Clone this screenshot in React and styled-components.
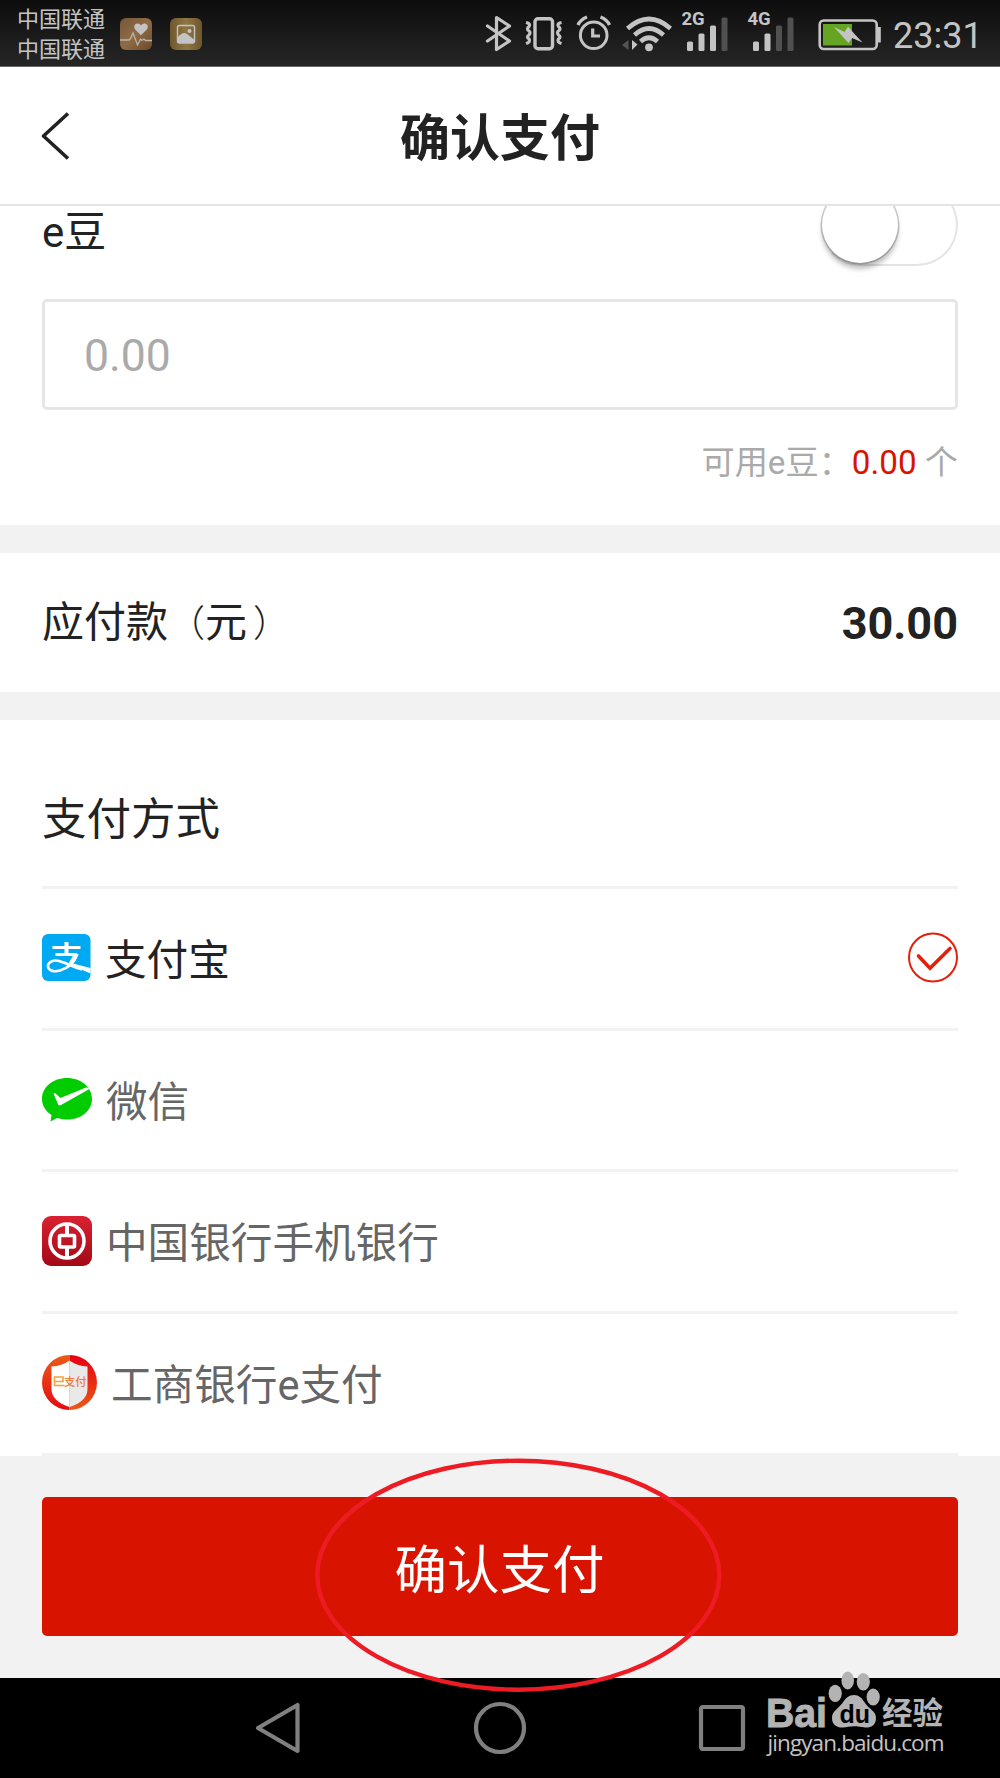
import React from 'react';
import styled, { createGlobalStyle } from 'styled-components';

const GlobalStyle = createGlobalStyle`
  * {
    box-sizing: border-box;
  }
  body {
    margin: 0;
    background: #fff;
    font-family: Roboto, "Noto Sans CJK SC", sans-serif;
    color: #222;
  }
  svg {
    display: block;
    flex-shrink: 0;
  }
`

const Screen = styled.div`
  position: relative;
  display: flex;
  flex-direction: column;
  width: 1000px;
  height: 1778px;
  overflow: hidden;
  background: #fff;
`

const StatusBar = styled.div`
  display: flex;
  align-items: center;
  height: 67px;
  padding: 1px 0 0 17px;
  background: linear-gradient(#0d0d0d, #262626);
  border-bottom: 1px solid #666;
  color: #c4c4c4;
`

const Carriers = styled.div`
  width: 103px;
  padding-top: 3px;
  font-size: 22px;
  line-height: 30.5px;
  white-space: nowrap;
`

const Apps = styled.div`
  display: flex;
  gap: 18px;
  width: 364px;
`

const StatusIcons = styled.div`
  display: flex;
  align-items: center;
`

const Clock = styled.span`
  margin-left: 7px;
  padding-top: 4px;
  font-size: 36px;
  line-height: 42px;
`

const Header = styled.header`
  display: grid;
  grid-template-columns: 120px 1fr 120px;
  align-items: center;
  height: 139px;
  border-bottom: 2px solid #e4e4e4;
`

const Back = styled.button`
  padding: 0 0 0 40px;
  border: 0;
  background: none;
`

const Title = styled.h1`
  margin: 0;
  padding-top: 6px;
  font-size: 50px;
  line-height: 60px;
  font-weight: 700;
  text-align: center;
`

const Beans = styled.section`
  height: 319px;
  padding: 0 42px;
  overflow: hidden;
`

const BeanRow = styled.div`
  display: flex;
  justify-content: space-between;
  align-items: flex-start;
  height: 93px;
`

const Label = styled.span`
  padding-top: 2px;
  font-size: 42px;
  line-height: 50px;
`

const Paren = styled.span`
  margin-left: ${({ $gap }) => $gap || 0}px;
  font-size: 37px;
  font-weight: 300;
`

const Switch = styled.div`
  width: 139px;
  height: 82px;
  margin-top: -22px;
  border: 2.5px solid #e4e4e4;
  border-left-color: transparent;
  border-radius: 41px;
`

const Knob = styled.div`
  width: 76px;
  height: 76px;
  margin: 1px 0 0 1px;
  border-radius: 50%;
  background: #fff;
  box-shadow: 0 0 0 1.5px rgba(0, 0, 0, 0.2), 0 6px 5px rgba(0, 0, 0, 0.25);
`

const Amount = styled.div`
  display: flex;
  align-items: center;
  height: 111px;
  padding: 2px 0 0 39px;
  border: 3px solid #e6e6e6;
  border-radius: 5px;
  font-size: 44.5px;
  color: #aaa;
`

const Available = styled.div`
  margin-top: 33px;
  font-size: 33.2px;
  line-height: 40px;
  text-align: right;
  color: #aaa;
`

const Red = styled.span`
  color: #d81400;
`

const Band = styled.div`
  height: 28px;
  background: #f2f2f2;
`

const Payable = styled.section`
  display: flex;
  justify-content: space-between;
  align-items: center;
  height: 139px;
  padding: 0 42px;
`

const Total = styled.strong`
  padding-top: 2px;
  font-size: 45px;
  font-weight: 700;
`

const Methods = styled.section`
  height: 736px;
  padding: 0 42px;
  overflow: hidden;
`

const MethodsTitle = styled.h2`
  display: flex;
  align-items: flex-end;
  height: 169px;
  margin: 0;
  padding-bottom: 36px;
  border-bottom: 3px solid #f2f2f2;
  font-size: 44.5px;
  line-height: 60px;
  font-weight: 400;
`

const Method = styled.div`
  display: flex;
  align-items: center;
  height: 141.7px;
  padding-bottom: 1px;
  border-bottom: 3px solid #f2f2f2;
  color: ${({ $active }) => ($active ? '#222' : '#666')};
`

const MethodName = styled.span`
  flex: 1;
  margin-left: 14px;
  padding-top: 6px;
  font-size: 41.6px;
  line-height: 50px;
`

const Footer = styled.footer`
  height: 222px;
  padding: 41px 42px 0;
  background: #f2f2f2;
`

const PayButton = styled.button`
  width: 100%;
  height: 139px;
  padding: 0 1px 1px 0;
  border: 0;
  border-radius: 5px;
  background: #d81400;
  color: #fff;
  font-family: inherit;
  font-size: 52.5px;
`

const NavBar = styled.nav`
  display: flex;
  align-items: center;
  gap: 168px;
  height: 100px;
  padding-left: 250px;
  background: #000;
`

const Ring = styled.svg`
  position: absolute;
  left: 310px;
  top: 1453px;
`

const Watermark = styled.div`
  position: absolute;
  left: 766px;
  top: 1670px;
  width: 190px;
  height: 100px;
`

const HealthIcon = () => (
  <svg width="32" height="32" viewBox="0 0 32 32">
    <defs>
      <linearGradient id="bronze" x1="0" y1="0" x2="1" y2="1">
        <stop offset="0" stopColor="#755638" />
        <stop offset=".5" stopColor="#8f6c46" />
        <stop offset="1" stopColor="#6b4a2a" />
      </linearGradient>
    </defs>
    <rect width="32" height="32" rx="6" fill="url(#bronze)" />
    <path d="M21 17.300l-5.600-5.600c-2-2.200-1.200-6 1.800-6.100 1.800 0 3 .8 3.800 2 .8-1.200 2-2 3.700-2 3 .1 4.100 3.900 1.900 6.100z" fill="#c4c4c4" />
    <path d="M0 22h9l1.500-1.500L13 15l4.500 12 3-6 1.500 1.500 2-1.500 1.500 1.500H32" fill="none" stroke="#b9b4aa" strokeWidth="1.300" />
  </svg>
)

const GalleryIcon = () => (
  <svg width="32" height="32" viewBox="0 0 32 32">
    <defs>
      <linearGradient id="gold" x1="0" y1="0" x2="1" y2="0">
        <stop offset="0" stopColor="#6e572c" />
        <stop offset=".5" stopColor="#8f7645" />
        <stop offset="1" stopColor="#6e572c" />
      </linearGradient>
    </defs>
    <rect width="32" height="32" rx="6" fill="url(#gold)" />
    <rect x="7.500" y="7.500" width="17" height="17.500" rx="2" fill="none" stroke="#c4c4c4" strokeWidth="1.400" />
    <path d="M8 19q5-6 9-3l7 5.500V25H8z" fill="#c4c4c4" />
    <circle cx="19.500" cy="13" r="2" fill="#c4c4c4" />
  </svg>
)

const BluetoothIcon = () => (
  <svg width="30" height="40" viewBox="484 14 30 40" fill="none" stroke="#c4c4c4" strokeWidth="3.200" strokeLinejoin="round" strokeLinecap="round">
    <path d="M487.500 26l22 15-13 8.500v-32l13 8.500-22 15" />
  </svg>
)

const VibrateIcon = () => (
  <svg width="50" height="40" viewBox="514 14 50 40" fill="none" stroke="#c4c4c4" strokeWidth="3.400">
    <rect x="535" y="18.700" width="17.500" height="30" rx="3" />
    <path
      d="M526 22.500q5 1 3 4-3 2.500 0 4.500 2 1.500 0 4-3 2 0 4 2 3-3 4.500M561.500 22.500q-5 1-3 4 3 2.500 0 4.500-2 1.500 0 4 3 2 0 4-2 3 3 4.500"
      strokeWidth="3.200"
    />
  </svg>
)

const AlarmIcon = () => (
  <svg width="50" height="40" viewBox="564 14 50 40" fill="none" stroke="#c4c4c4" strokeWidth="3">
    <circle cx="593.700" cy="35.300" r="13.300" />
    <path d="M592.700 28.500v7.500h7.300" strokeWidth="3.200" />
    <path d="M578 25q2.500-5.500 9-8M609.500 25q-2.500-5.500-9-8" strokeWidth="3.400" />
  </svg>
)

const WifiIcon = () => (
  <svg width="62" height="40" viewBox="614 14 62 40" fill="none" stroke="#c4c4c4" strokeWidth="4.600">
    <path d="M627.500 28.500q21.500-19 43 0M634.500 35q14.500-13 29 0M640.500 41.500q8.500-7.500 17 0" />
    <circle cx="649" cy="47.300" r="3.900" fill="#c4c4c4" stroke="none" />
    <path d="M628.500 40v10l-6.500-5z" fill="#555" stroke="none" />
    <path d="M632 50V40l5.500 4.500z" fill="#c4c4c4" stroke="none" />
  </svg>
)

const Signal = ({ label, bars }) => (
  <svg width="66" height="58" viewBox="0 -7 66 58">
    <text x="5.500" y="13.200" fontFamily="Roboto" fontSize="18.500" fontWeight="700" fill="#c4c4c4">{label}</text>
    {[0, 1, 2, 3].map((i) => (
      <rect key={i} x={11 + i * 11.500} y={29.500 - i * 8} width="6" height={9.500 + i * 8} rx="1.500" fill={i < bars ? '#c4c4c4' : '#505050'} />
    ))}
  </svg>
)

const BatteryIcon = () => (
  <svg width="78" height="40" viewBox="808 14 78 40">
    <rect x="819.700" y="20.500" width="57" height="28.500" rx="4" fill="none" stroke="#c4c4c4" strokeWidth="2.600" />
    <rect x="878" y="27" width="2.800" height="15.500" fill="#c4c4c4" />
    <rect x="823" y="24" width="29" height="21.500" fill="#66a523" />
    <path d="M834 27l10.500 5 3.500-5.500 6.500 7.500 8 8.500-10.500-4.500-3.500 5z" fill="#c4c4c4" />
  </svg>
)

const AlipayIcon = () => (
  <svg width="49" height="48" viewBox="0 0 49 48">
    <rect width="48.500" height="47" rx="6" fill="#00aaf2" />
    <g fill="none" stroke="#fff" strokeWidth="2.800">
      <path d="M10.500 13.500h28M13.500 20.500h21.500" />
      <path d="M24.500 8v12" strokeWidth="4" />
      <path d="M35.500 20c-3 8-9 14-17.500 16.500-7 2-12.500-.5-12-5 .5-4 6-6 11-4.500 7 2 15 6 23 8.500" strokeWidth="2.600" />
    </g>
    <path d="M36 20l-7 9 19.500 5v5.500q-11-4.500-22-10l5.500-9.500z" fill="#fff" />
  </svg>
)

const WechatIcon = () => (
  <svg width="50" height="44" viewBox="0 0 50 44">
    <path d="M25 0c14 0 25 9 25 21S39 41.500 25 41.500c-4 0-7-.7-10-1.500L8.500 43.500 9.500 37C4 33.500 0 28 0 21 0 9 11 0 25 0z" fill="#0c0" />
    <path d="M11.500 15.500q1-.8 2 0l5 4.500L44 9.500q2-.5 3.500 1.500L19 27q-2 1.200-3-.8z" fill="#fff" />
  </svg>
)

const BocIcon = () => (
  <svg width="50" height="50" viewBox="0 0 50 50">
    <defs>
      <linearGradient id="boc" x1="0" y1="0" x2="0" y2="1">
        <stop offset="0" stopColor="#d92231" />
        <stop offset="1" stopColor="#a30917" />
      </linearGradient>
    </defs>
    <rect width="50" height="50" rx="9" fill="url(#boc)" />
    <g fill="none" stroke="#fff">
      <circle cx="25" cy="25" r="17" strokeWidth="3.600" />
      <rect x="17.500" y="19.500" width="15" height="11.500" rx="1" strokeWidth="3.600" />
      <path d="M25 8v10M25 32v10" strokeWidth="4" />
    </g>
  </svg>
)

const IcbcIcon = () => (
  <svg width="55" height="55" viewBox="0 0 55 55">
    <defs>
      <linearGradient id="icbcLeft" x1="0" y1="0" x2="0" y2="1">
        <stop offset="0" stopColor="#ea5a18" />
        <stop offset="1" stopColor="#e60a12" />
      </linearGradient>
      <linearGradient id="icbcRight" x1="0" y1="0" x2="0" y2="1">
        <stop offset="0" stopColor="#e60012" />
        <stop offset="1" stopColor="#ea5a18" />
      </linearGradient>
    </defs>
    <path d="M27.500 0a27.500 27.500 0 0 0 0 55z" fill="url(#icbcLeft)" />
    <path d="M27.500 0a27.500 27.500 0 0 1 0 55z" fill="url(#icbcRight)" />
    <path d="M27.500 5.500Q20 11 9.500 11.500V34q0 12 18 18z" fill="#fff" />
    <path d="M27.500 5.500Q35 11 45.500 11.500V34q0 12-18 18z" fill="#e9e9ea" />
    <path d="M12 26.500h9v-4.500h-8.500v8.500h10" fill="none" stroke="#f5a13a" strokeWidth="1.600" />
    <text x="22" y="31" fontFamily="Noto Sans CJK SC" fontSize="11.300" fontWeight="500" fill="#ef7a3c">支付</text>
  </svg>
)

const CheckIcon = () => (
  <svg width="50" height="51" viewBox="0 0 50 51" fill="none" stroke="#e2210c">
    <circle cx="25" cy="25.500" r="24" strokeWidth="2" />
    <path d="M10.500 24l11.500 12.200L42 16.500" strokeWidth="3.600" strokeLinecap="round" />
  </svg>
)

const methods = [
  { name: '支付宝', icon: <AlipayIcon />, active: true },
  { name: '微信', icon: <WechatIcon /> },
  { name: '中国银行手机银行', icon: <BocIcon /> },
  { name: '工商银行e支付', icon: <IcbcIcon /> },
]

const App = () => {
  return (
    <Screen>
      <GlobalStyle />
      <StatusBar>
        <Carriers>
          <div>中国联通</div>
          <div>中国联通</div>
        </Carriers>
        <Apps>
          <HealthIcon />
          <GalleryIcon />
        </Apps>
        <StatusIcons>
          <BluetoothIcon />
          <VibrateIcon />
          <AlarmIcon />
          <WifiIcon />
          <Signal label="2G" bars={3} />
          <Signal label="4G" bars={2} />
          <BatteryIcon />
          <Clock>23:31</Clock>
        </StatusIcons>
      </StatusBar>
      <Header>
        <Back>
          <svg width="30" height="48" viewBox="0 0 30 48" fill="none" stroke="#222" strokeWidth="3.600">
            <path d="M28 1.500L3.500 24 28 46.500" strokeLinejoin="round" />
          </svg>
        </Back>
        <Title>确认支付</Title>
      </Header>
      <Beans>
        <BeanRow>
          <Label>e豆</Label>
          <Switch>
            <Knob />
          </Switch>
        </BeanRow>
        <Amount>0.00</Amount>
        <Available>可用e豆：<Red>0.00</Red> 个</Available>
      </Beans>
      <Band />
      <Payable>
        <Label>应付款<Paren>（</Paren>元<Paren $gap={6}>）</Paren></Label>
        <Total>30.00</Total>
      </Payable>
      <Band />
      <Methods>
        <MethodsTitle>支付方式</MethodsTitle>
        {methods.map((m) => (
          <Method key={m.name} $active={m.active}>
            {m.icon}
            <MethodName>{m.name}</MethodName>
            {m.active && <CheckIcon />}
          </Method>
        ))}
      </Methods>
      <Footer>
        <PayButton>确认支付</PayButton>
      </Footer>
      <NavBar>
        <svg width="54" height="56" viewBox="0 0 54 56" fill="none" stroke="#808080" strokeWidth="4.200" strokeLinejoin="round">
          <path d="M8 28L47.500 5v46z" />
        </svg>
        <svg width="56" height="56" viewBox="0 0 56 56" fill="none" stroke="#808080" strokeWidth="4.200">
          <circle cx="28" cy="28" r="24" />
        </svg>
        <svg width="56" height="56" viewBox="0 0 56 56" fill="none" stroke="#808080" strokeWidth="4.200">
          <rect x="5" y="7" width="42" height="42" rx="2" />
        </svg>
      </NavBar>
      <Ring width="416" height="244" viewBox="310 1453 416 244" fill="none">
        <ellipse cx="518.300" cy="1575.200" rx="201" ry="114.500" stroke="#ed1c24" strokeWidth="4.400" />
      </Ring>
      <Watermark>
        <svg width="190" height="100" viewBox="766 1670 190 100" fill="#b3b3b3">
          <text x="766" y="1726.500" fontFamily="Liberation Sans" fontSize="41" fontWeight="700" textLength="61" lengthAdjust="spacingAndGlyphs" stroke="#b3b3b3" strokeWidth="1">Bai</text>
          <ellipse cx="835.200" cy="1693.300" rx="6.600" ry="8.600" />
          <ellipse cx="847.700" cy="1680.500" rx="6.300" ry="9" />
          <ellipse cx="863.300" cy="1681.700" rx="6.600" ry="8.800" />
          <ellipse cx="873.200" cy="1697" rx="6.600" ry="8.600" />
          <path d="M854 1695c5 0 8 3 11 8 4 6 11 8 11 15 0 8-6 10-11 9.500-4-.5-7-1.200-11-1.200s-7 1-11 1.200c-5 .5-11-2-11-9.500 0-7 6-9 10.500-15 3-5 6.500-8 11.500-8z" />
          <text x="839.500" y="1722.500" fontFamily="Liberation Sans" fontSize="25" fontWeight="700" fill="#000">du</text>
          <text x="882" y="1724" fontFamily="Noto Sans CJK SC" fontSize="30.500" fontWeight="700">经验</text>
          <text x="767.500" y="1750.500" fontFamily="Open Sans" fontSize="22.500" textLength="177" fill="#c4c4c4">jingyan.baidu.com</text>
        </svg>
      </Watermark>
    </Screen>
  )
}

export default App;
